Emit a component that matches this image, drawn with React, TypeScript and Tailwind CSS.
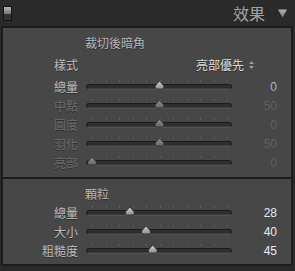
const FONT = { fontFamily: '"Noto Sans CJK TC", "Noto Sans", sans-serif' };

type Row = { label: string; pos: number; value: string; on: boolean };

const vignette: Row[] = [
  { label: "總量", pos: 0.5, value: "0", on: true },
  { label: "中點", pos: 0.5, value: "50", on: false },
  { label: "圓度", pos: 0.5, value: "0", on: false },
  { label: "羽化", pos: 0.5, value: "50", on: false },
  { label: "亮部", pos: 0, value: "0", on: false },
];

const grain: Row[] = [
  { label: "總量", pos: 0.28, value: "28", on: true },
  { label: "大小", pos: 0.4, value: "40", on: true },
  { label: "粗糙度", pos: 0.45, value: "45", on: true },
];

function Slider({ pos, on }: { pos: number; on: boolean }) {
  const cx = 6 + pos * 135;
  const id = on ? "thumbOn" : "thumbOff";
  return (
    <svg width="146" height="19" viewBox="0 0 146 19">
      <defs>
        <linearGradient id="thumbOn" x1="0" y1="0" x2="0" y2="1">
          <stop offset="0" stopColor="#d4d4d4" />
          <stop offset="1" stopColor="#8c8c8c" />
        </linearGradient>
        <linearGradient id="thumbOff" x1="0" y1="0" x2="0" y2="1">
          <stop offset="0" stopColor="#8e8e8e" />
          <stop offset="1" stopColor="#666" />
        </linearGradient>
      </defs>
      {Array.from({ length: 11 }).map((_, i) => (
        <rect key={i} x={Math.round(6 + i * 13.5)} y="3" width="1" height="2" fill="#5c5c5c" />
      ))}
      <rect x="0.5" y="7.5" width="145" height="4" rx="2" fill="#2e2e2e" stroke="#1c1c1c" />
      <line x1="2" y1="12" x2="144" y2="12" stroke="#5e5e5e" />
      <path
        d={`M${cx} 4 L${cx + 4} 8.5 Q${cx + 5.5} 12 ${cx + 2} 12 L${cx - 2} 12 Q${cx - 5.5} 12 ${cx - 4} 8.5 Z`}
        fill={`url(#${id})`}
        stroke="#2a2a2a"
        strokeWidth="0.8"
      />
    </svg>
  );
}

function SliderRow({ row, bright }: { row: Row; bright: string }) {
  return (
    <div className="flex h-[19px] items-center">
      <div
        className={`w-[75px] text-right text-[12px] leading-none [text-shadow:0_1px_0_#2c2c2c] ${
          row.on ? "text-[#bdbdbd]" : "text-[#6c6c6c]"
        }`}
      >
        {row.label}
      </div>
      <div className="ml-[8px] w-[146px]">
        <Slider pos={row.pos} on={row.on} />
      </div>
      <div
        className={`w-[45px] text-right text-[12px] leading-none ${row.on ? bright : "text-[#5f5f5f]"}`}
        style={{ fontFamily: '"Liberation Sans", sans-serif' }}
      >
        {row.value}
      </div>
    </div>
  );
}

export default function App() {
  return (
    <div className="h-[271px] w-[295px] overflow-hidden bg-[#2a2a2a]" style={FONT}>
      <div className="flex h-[26px] items-center">
        <div className="ml-[3px] flex h-[15px] w-[9px] flex-col border border-[#141414] bg-[#323232]">
          <div className="h-[7px] bg-gradient-to-b from-[#b4b4b4] to-[#767676]" />
        </div>
        <div className="ml-auto text-[16px] leading-none text-[#a3a3a3]">效果</div>
        <svg className="ml-[13px] mr-[8px]" width="9" height="9" viewBox="0 0 9 9">
          <defs>
            <linearGradient id="tri" x1="0" y1="0" x2="0" y2="1">
              <stop offset="0" stopColor="#b0b0b0" />
              <stop offset="1" stopColor="#7a7a7a" />
            </linearGradient>
          </defs>
          <path d="M0 0.5 H9 L4.5 8.5 Z" fill="url(#tri)" />
        </svg>
      </div>
      <div className="ml-[1px] w-[292px] border-2 border-[#1c1c1c] bg-[#474747]">
        <div className="h-[149px] pt-[5px]">
          <div className="flex h-[19px] items-center pl-[82px] text-[12px] leading-none text-[#b8b8b8] [text-shadow:0_1px_0_#2c2c2c]">
            裁切後暗角
          </div>
          <div className="mt-[3px] flex h-[19px] items-center">
            <div className="w-[75px] text-right text-[12px] leading-none text-[#bdbdbd] [text-shadow:0_1px_0_#2c2c2c]">
              樣式
            </div>
            <div className="ml-[118px] text-[12px] leading-none text-[#dedede] [text-shadow:0_1px_0_#2c2c2c]">
              亮部優先
            </div>
            <svg className="ml-[5px]" width="5" height="8" viewBox="0 0 5 8">
              <path d="M0 3 L2.5 0 L5 3 Z M0 5 L2.5 8 L5 5 Z" fill="#9a9a9a" />
            </svg>
          </div>
          <div className="mt-[3px]">
            {vignette.map((r) => (
              <SliderRow key={r.label} row={r} bright="text-[#a9b5c6]" />
            ))}
          </div>
        </div>
        <div className="h-[87px] border-t-2 border-[#1c1c1c] pt-[5px]">
          <div className="flex h-[19px] items-center pl-[82px] text-[12px] leading-none text-[#b8b8b8] [text-shadow:0_1px_0_#2c2c2c]">
            顆粒
          </div>
          {grain.map((r) => (
            <SliderRow key={r.label} row={r} bright="text-[#e4ecf8]" />
          ))}
        </div>
      </div>
    </div>
  );
}
